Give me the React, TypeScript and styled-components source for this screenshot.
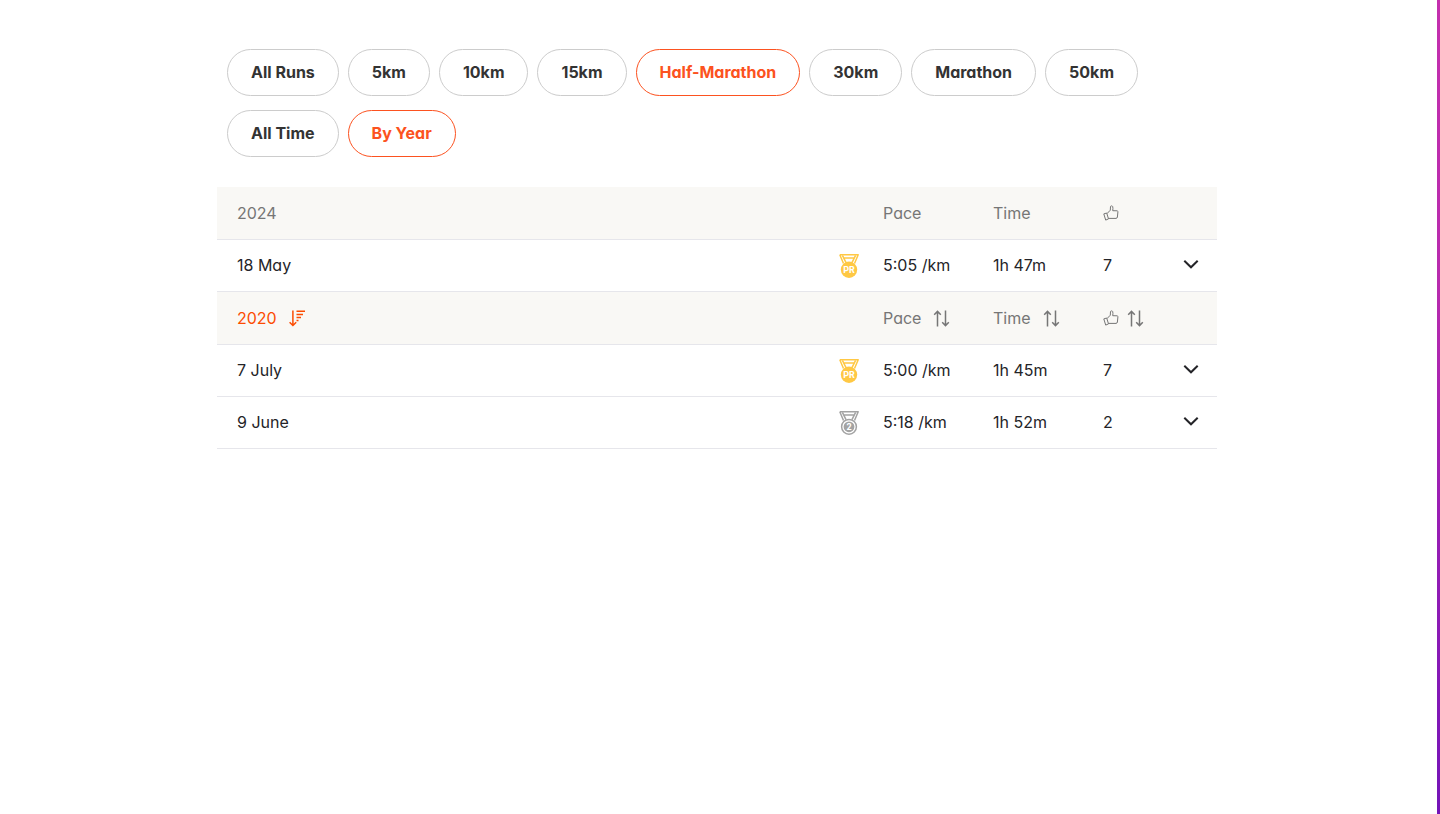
import React, { useState } from "react";
import styled, { createGlobalStyle, css } from "styled-components";

const color = {
  text: "#242428",
  pillText: "#333333",
  muted: "#767676",
  accent: "#fc5220",
  sorted: "#fc4c02",
  pillBorder: "#cccccc",
  line: "#e6e6eb",
  headBg: "#f9f8f5",
  gold: "#ffc844",
  silver: "#a3a3a3",
};

const GlobalStyle = createGlobalStyle`
  *, *::before, *::after { box-sizing: border-box; }
  html { background: #fff; }
  body {
    margin: 0;
    color: ${color.text};
    font-family: Inter, "Liberation Sans", sans-serif;
    font-size: 16px;
    line-height: 24px;
    font-feature-settings: "cv11" 1;
    -webkit-font-smoothing: antialiased;
  }
`;

const Page = styled.div`
  display: flex;
  min-height: 100vh;
`;

const Main = styled.main`
  flex: 1;
  min-width: 0;
  padding: 49px 20px 40px 17px;
`;

const Edge = styled.div`
  flex: none;
  width: 3px;
  background: linear-gradient(180deg, #c42fae 0%, #b82bae 35%, #9a1eb4 62%, #7414b8 100%);
`;

const Content = styled.div`
  max-width: 1000px;
  margin: 0 auto;
`;

const Filters = styled.div`
  display: flex;
  flex-direction: column;
  gap: 14px;
  padding: 0 10px;
  margin-bottom: 30px;
`;

const PillRow = styled.div`
  display: flex;
  flex-wrap: wrap;
  gap: 9px;
`;

const Pill = styled.button<{ $active: boolean }>`
  height: 47px;
  padding: 0 23px 1px;
  border: 1px solid ${(p) => (p.$active ? color.accent : color.pillBorder)};
  border-radius: 24px;
  background: #fff;
  color: ${(p) => (p.$active ? color.accent : color.pillText)};
  font: inherit;
  font-weight: 700;
  font-feature-settings: inherit;
  white-space: nowrap;
  cursor: pointer;
`;

const Table = styled.table`
  width: 100%;
  table-layout: fixed;
  border-collapse: separate;
  border-spacing: 0;
`;

const Col = styled.col<{ $w?: number }>`
  ${(p) => p.$w && css`width: ${p.$w}px;`}
`;

const HeadRow = styled.tr`
  height: 53px;
  background: ${color.headBg};
  color: ${color.muted};
`;

const RunRow = styled.tr`
  height: 52px;
`;

const cell = css`
  padding: 0 0 0 10px;
  border-bottom: 1px solid ${color.line};
  text-align: left;
  font-weight: 400;
  vertical-align: middle;
  white-space: nowrap;
  &:first-child { padding-left: 20px; }
`;

const HeadCell = styled.th`
  ${cell}
`;

const Cell = styled.td`
  ${cell}
`;

const TextCell = styled(Cell)`
  padding-bottom: 1px;
`;

const SortButton = styled.button<{ $active?: boolean; $gap?: number }>`
  display: flex;
  align-items: center;
  gap: ${(p) => p.$gap ?? 12}px;
  padding: 0;
  border: 0;
  background: none;
  color: ${(p) => (p.$active ? color.sorted : "inherit")};
  font: inherit;
  font-feature-settings: inherit;
  cursor: pointer;
`;

const Icon = styled.svg`
  display: block;
  flex: none;
`;

const ToggleButton = styled.button`
  display: block;
  padding: 0;
  border: 0;
  background: none;
  color: ${color.text};
  cursor: pointer;
`;

const MedalLabel = styled.text`
  font-family: "Liberation Sans Narrow", Roboto, sans-serif;
  font-size: 9px;
  font-weight: 700;
  text-anchor: middle;
`;

const ThumbIcon = () => (
  <Icon width="16" height="16" viewBox="0 0 16 16" fill="none" stroke="currentColor" strokeWidth="1" strokeLinejoin="round" role="img" aria-label="Kudos">
    <path d="M.8 8.9 3.7 8l1.8 5.900-2.800 1.200z" />
    <path d="M4 8.600 7.300 5.200 7.500 1.500c.1-.8 1.900-.9 2.200.1.3 1.300.3 2.600 0 4.100l4.300.1c.8.1 1 .6.9 1.200L14.400 12c-.2.9-.6 1.400-1.400 1.400H5.400" />
  </Icon>
);

const SortIcon = () => (
  <Icon width="18" height="18" viewBox="0 0 18 18" fill="none" stroke="currentColor" strokeWidth="1.5" aria-hidden="true">
    <path d="M4.500 17.500V2.500M1.200 5.700l3.300-3.300 3.300 3.300M12.500 1.500v15M9.200 13.300l3.300 3.300 3.300-3.300" />
  </Icon>
);

const SortDescIcon = () => (
  <Icon width="18" height="18" viewBox="0 0 18 18" fill="none" stroke="currentColor" strokeWidth="1.5" aria-hidden="true">
    <path d="M3.900 1.500v15M.6 13.200l3.300 3.300 3.300-3.300M7.500 2.300h8.500M7.500 5.400h6.500M7.500 8.500h4.500M7.500 11.600h2" />
  </Icon>
);

const ChevronIcon = () => (
  <Icon width="16" height="16" viewBox="0 0 16 16" fill="none" stroke="currentColor" strokeWidth="2" aria-hidden="true">
    <path d="M1.300 2.700 8 9.300l6.700-6.600" />
  </Icon>
);

const MedalIcon = ({ kind }: { kind: "pr" | "second" }) => {
  const pr = kind === "pr";
  const tone = pr ? color.gold : color.silver;
  return (
    <Icon width="20" height="26" viewBox="0 0 20 26" fill="none" stroke={tone} strokeWidth="1.5" strokeLinejoin="round" role="img" aria-label={pr ? "Personal record" : "Second best"}>
      <path d="M.8 1.800h18.400l-3.700 8.700M.8 1.800l3.700 8.700" />
      <path d="M3.400 2.300 7 9.600M16.600 2.300 13 9.600M4.800 4.900h10.400" />
      {pr ? (
        <circle cx="10" cy="16.800" r="8.200" fill={tone} stroke="none" />
      ) : (
        <>
          <circle cx="10" cy="16.800" r="7.400" fill="#fff" />
          <circle cx="10" cy="16.800" r="5.400" fill={tone} stroke="none" />
        </>
      )}
      <MedalLabel x="10" y="20" fill="#fff" stroke="none">
        {pr ? "PR" : "2"}
      </MedalLabel>
    </Icon>
  );
};

type Run = { date: string; medal: "pr" | "second"; pace: string; time: string; kudos: number };

const distances = ["All Runs", "5km", "10km", "15km", "Half-Marathon", "30km", "Marathon", "50km"];
const ranges = ["All Time", "By Year"];
const years: { year: string; sortable: boolean; runs: Run[] }[] = [
  {
    year: "2024",
    sortable: false,
    runs: [{ date: "18 May", medal: "pr", pace: "5:05 /km", time: "1h 47m", kudos: 7 }],
  },
  {
    year: "2020",
    sortable: true,
    runs: [
      { date: "7 July", medal: "pr", pace: "5:00 /km", time: "1h 45m", kudos: 7 },
      { date: "9 June", medal: "second", pace: "5:18 /km", time: "1h 52m", kudos: 2 },
    ],
  },
];

type PillGroupProps = { label: string; options: string[]; value: string; onChange: (v: string) => void };

const PillGroup = ({ label, options, value, onChange }: PillGroupProps) => (
  <PillRow role="group" aria-label={label}>
    {options.map((o) => (
      <Pill key={o} type="button" $active={o === value} aria-pressed={o === value} onClick={() => onChange(o)}>
        {o}
      </Pill>
    ))}
  </PillRow>
);

export default function App() {
  const [distance, setDistance] = useState("Half-Marathon");
  const [range, setRange] = useState("By Year");

  return (
    <>
      <GlobalStyle />
      <Page>
        <Main>
          <Content>
            <Filters>
              <PillGroup label="Distance" options={distances} value={distance} onChange={setDistance} />
              <PillGroup label="Period" options={ranges} value={range} onChange={setRange} />
            </Filters>
            <Table>
              <colgroup>
                <Col />
                <Col $w={44} />
                <Col $w={110} />
                <Col $w={110} />
                <Col $w={80} />
                <Col $w={44} />
              </colgroup>
              {years.map(({ year, sortable, runs }) => (
                <tbody key={year}>
                  <HeadRow>
                    <HeadCell scope="col" colSpan={2} aria-sort={sortable ? "descending" : undefined}>
                      {sortable ? <SortButton type="button" $active>{year}<SortDescIcon /></SortButton> : year}
                    </HeadCell>
                    {["Pace", "Time"].map((h) => (
                      <HeadCell key={h} scope="col">
                        {sortable ? <SortButton type="button">{h}<SortIcon /></SortButton> : h}
                      </HeadCell>
                    ))}
                    <HeadCell scope="col" colSpan={2}>
                      {sortable ? <SortButton type="button" $gap={8}><ThumbIcon /><SortIcon /></SortButton> : <ThumbIcon />}
                    </HeadCell>
                  </HeadRow>
                  {runs.map((r) => (
                    <RunRow key={r.date}>
                      <TextCell>{r.date}</TextCell>
                      <Cell><MedalIcon kind={r.medal} /></Cell>
                      <TextCell>{r.pace}</TextCell>
                      <TextCell>{r.time}</TextCell>
                      <TextCell>{r.kudos}</TextCell>
                      <Cell>
                        <ToggleButton type="button" aria-label={`Show details for ${r.date} ${year}`}>
                          <ChevronIcon />
                        </ToggleButton>
                      </Cell>
                    </RunRow>
                  ))}
                </tbody>
              ))}
            </Table>
          </Content>
        </Main>
        <Edge />
      </Page>
    </>
  );
}
